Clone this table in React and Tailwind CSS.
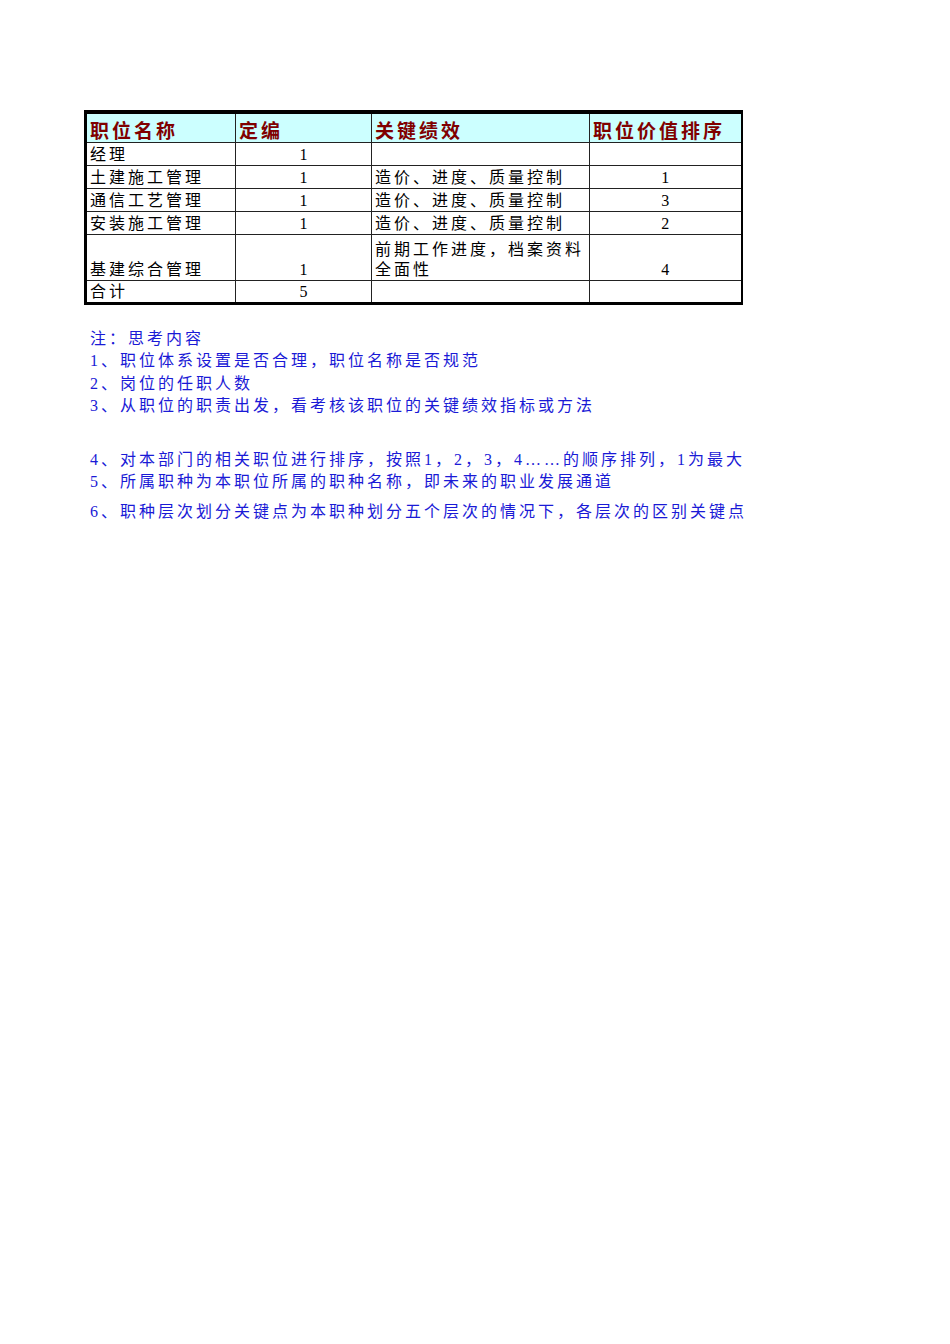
import React from 'react';

const rows = [
  { name: '经理', count: '1', kpi: '', rank: '' },
  { name: '土建施工管理', count: '1', kpi: '造价、进度、质量控制', rank: '1' },
  { name: '通信工艺管理', count: '1', kpi: '造价、进度、质量控制', rank: '3' },
  { name: '安装施工管理', count: '1', kpi: '造价、进度、质量控制', rank: '2' },
  { name: '基建综合管理', count: '1', kpi: ['前期工作进度，档案资料', '全面性'], rank: '4', tall: true },
  { name: '合计', count: '5', kpi: '', rank: '' },
];

const notes = [
  { text: '注：思考内容', mt: 'mt-0' },
  { text: '1、职位体系设置是否合理，职位名称是否规范', mt: 'mt-0' },
  { text: '2、岗位的任职人数', mt: 'mt-0' },
  { text: '3、从职位的职责出发，看考核该职位的关键绩效指标或方法', mt: 'mt-0' },
  { text: '4、对本部门的相关职位进行排序，按照1，2，3，4……的顺序排列，1为最大', mt: 'mt-[31px]' },
  { text: '5、所属职种为本职位所属的职种名称，即未来的职业发展通道', mt: 'mt-0' },
  { text: '6、职种层次划分关键点为本职种划分五个层次的情况下，各层次的区别关键点', mt: 'mt-[7px]' },
];

const App = () => {
  return (
    <div className="w-[950px] h-[1344px] bg-white font-['Liberation_Serif','Noto_Sans_CJK_SC',serif]">
      <div className="pt-[110px] pl-[84px]">
        <table className="border-collapse border-t-[4px] border-b-[3px] border-l-[3px] border-r-[2px] border-black text-[16px] leading-[20px] text-black">
          <thead>
            <tr className="h-[30px] bg-[#ccffff] text-[#800000] font-bold text-[19px] tracking-[3px]">
              <th className="w-[150px] border border-[#222] px-[3px] text-left align-bottom font-bold">职位名称</th>
              <th className="w-[136px] border border-[#222] px-[3px] text-left align-bottom font-bold">定编</th>
              <th className="w-[218px] border border-[#222] px-[3px] text-left align-bottom font-bold">关键绩效</th>
              <th className="w-[152px] border border-[#222] px-[3px] text-left align-bottom font-bold">职位价值排序</th>
            </tr>
          </thead>
          <tbody>
            {rows.map((r) => (
              <tr key={r.name} className={r.tall ? 'h-[46px]' : 'h-[23px]'}>
                <td className="border border-[#222] px-[3px] align-bottom tracking-[3px] whitespace-nowrap">{r.name}</td>
                <td className="border border-[#222] px-[3px] align-bottom text-center">{r.count}</td>
                <td className="border border-[#222] px-[3px] align-bottom tracking-[3px] whitespace-nowrap">
                  {Array.isArray(r.kpi) ? (
                    <>
                      {r.kpi[0]}
                      <br />
                      {r.kpi[1]}
                    </>
                  ) : (
                    r.kpi
                  )}
                </td>
                <td className="border border-[#222] px-[3px] align-bottom text-center">{r.rank}</td>
              </tr>
            ))}
          </tbody>
        </table>
      </div>

      {/* 说明 */}
      <div className="mt-[23px] ml-[90px] text-[16px] leading-[22.5px] text-[#1a1ad6] tracking-[3px]">
        {notes.map((n) => (
          <div key={n.text} className={`${n.mt} whitespace-nowrap`}>
            {n.text}
          </div>
        ))}
      </div>
    </div>
  );
};

export default App;
